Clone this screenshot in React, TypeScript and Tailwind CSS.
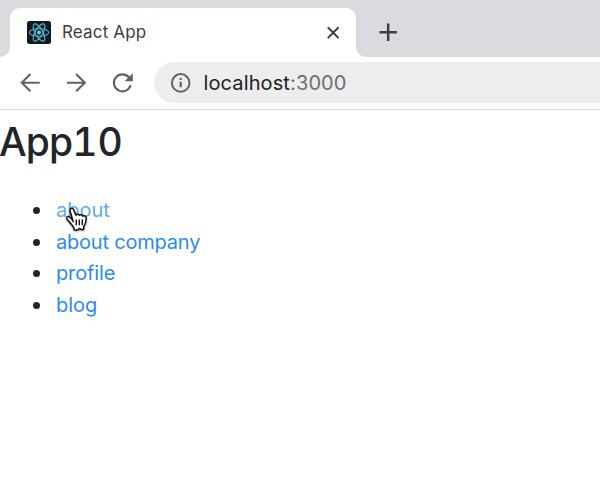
const links = [
  { label: 'about', style: 'text-[#62abf2] tracking-[0px]' },
  { label: 'about company', style: 'text-[#2d8bee] tracking-[-0.2px]' },
  { label: 'profile', style: 'text-[#2d8bee] tracking-[-0.15px]' },
  { label: 'blog', style: 'text-[#2d8bee] tracking-[0px]' },
];

function ReactLogo() {
  return (
    <svg width="24" height="24" viewBox="0 0 24 24" className="shrink-0">
      <rect width="24" height="23" rx="2.5" fill="#171a1c" />
      <g fill="none" stroke="#50b9d8" strokeWidth="1.1">
        <ellipse cx="12" cy="11.5" rx="9.7" ry="3.8" />
        <ellipse cx="12" cy="11.5" rx="9.7" ry="3.8" transform="rotate(60 12 11.5)" />
        <ellipse cx="12" cy="11.5" rx="9.7" ry="3.8" transform="rotate(120 12 11.5)" />
      </g>
      <circle cx="12" cy="11.5" r="2" fill="#61cdec" />
    </svg>
  );
}

function TabStrip() {
  return (
    <div className="flex h-[57px] items-end bg-[#dadbde]">
      <svg width="10" height="10" viewBox="0 0 10 10" className="shrink-0">
        <path d="M10 0A10 10 0 0 1 0 10H10Z" fill="#fff" />
      </svg>
      <div className="flex h-[49px] w-[346px] shrink-0 items-center rounded-t-[10px] bg-white pl-[17px] pr-4">
        <ReactLogo />
        <span className="ml-[11px] flex-1 pb-px text-[17px] leading-6 tracking-[0.15px] text-[#3c4043]">React App</span>
        <svg width="14" height="14" viewBox="0 0 14 14" stroke="#3c4043" strokeWidth="2">
          <path d="M1.8 1.3L12.6 12.1M12.6 1.3L1.8 12.1" />
        </svg>
      </div>
      <svg width="10" height="10" viewBox="0 0 10 10" className="shrink-0">
        <path d="M0 0A10 10 0 0 0 10 10H0Z" fill="#fff" />
      </svg>
      <svg width="20" height="20" viewBox="0 0 20 20" className="mb-[15px] ml-[12px]" stroke="#3c4043" strokeWidth="2.5">
        <path d="M10.2 1.6V19M1.5 10.3H18.9" />
      </svg>
    </div>
  );
}

function Toolbar() {
  return (
    <div className="flex h-[53px] items-center border-b border-[#d5d6d8] pb-px pl-[19px]">
      <svg width="22" height="22" viewBox="0 0 22 22" fill="none" stroke="#5f6368" strokeWidth="2.1">
        <path d="M20.7 10.7H3.2M11.4 2.1L2.8 10.7L11.4 19.3" />
      </svg>
      <svg width="22" height="22" viewBox="0 0 22 22" fill="none" stroke="#5f6368" strokeWidth="2.1" className="ml-6">
        <path d="M2 10.7H19.4M11.2 2.1L19.8 10.7L11.2 19.3" />
      </svg>
      <svg width="22" height="22" viewBox="0 0 22 22" fill="none" stroke="#5f6368" strokeWidth="2.1" className="ml-6">
        <path d="M19.6 13.2A8.5 8.5 0 1 1 17.8 5.2L19 6.6" />
        <path d="M21.8 1.2V9.2H13.5Z" fill="#5f6368" stroke="none" />
      </svg>
      <div className="ml-[21px] flex h-[41px] flex-1 items-center rounded-l-full bg-[#ededee] pl-4">
        <svg width="21" height="21" viewBox="0 0 21 21" fill="none" stroke="#5f6368" strokeWidth="2">
          <circle cx="10.7" cy="10.9" r="8.8" />
          <path d="M10.7 9.7V15.3M10.7 6V8.1" strokeWidth="2.2" />
        </svg>
        <span className="ml-[12.5px] pt-px text-[20px] leading-7 tracking-[0.12px] text-[#202124]">
          localhost<span className="text-[#6b6e72]">:3000</span>
        </span>
      </div>
    </div>
  );
}

function HandCursor() {
  return (
    <svg width="24" height="28" viewBox="0 0 24 28" className="absolute left-[9px] top-[11px] drop-shadow-[0_1px_1px_rgba(0,0,0,0.35)]">
      <path
        d="M8.4 16.2L5.1 5.2C4.3 2.4 7.3 1.1 8.6 3.7L11 9.1C12 7.7 13.8 8 14.3 9.2C15.5 8.2 17 8.7 17.5 10C19.5 9.2 21.3 10.3 21.2 12.5C21.2 16 20.2 18.5 18.7 20.8V23.6H16.3L14.5 22.4L12.8 24H9.4C9 21 7.2 19.2 5.4 17.2L2.2 13.2C0.7 11 3.1 9.6 4.8 11.2L7.8 14.2"
        fill="#fff"
        stroke="#111"
        strokeWidth="1.5"
        strokeLinejoin="round"
      />
      <path d="M11.3 13.5V19.3M14.3 13.5V19.3M17.3 13.5V19.3" stroke="#111" strokeWidth="1.4" />
    </svg>
  );
}

export default function App() {
  return (
    <div className="h-[478px] w-[600px] overflow-hidden bg-white font-['Inter','Liberation_Sans',sans-serif]">
      <TabStrip />
      <Toolbar />
      <main className="pt-[7px] text-[#212529]">
        <h1 className="-ml-px text-[39px] font-medium leading-[49px]">
          <span className="tracking-[-0.9px]">App</span>
          <span className="tabular-nums">10</span>
        </h1>
        <ul className="mt-[28px]">
          {links.map((link, index) => (
            <li key={link.label} className="flex h-[31.7px] items-center pl-[33px]">
              <span className="mr-4 mt-px size-[7px] shrink-0 rounded-full bg-[#212529]" />
              <span className="relative">
                <a className={`text-[20px] leading-[30px] ${link.style}`}>{link.label}</a>
                {index === 0 && <HandCursor />}
              </span>
            </li>
          ))}
        </ul>
      </main>
    </div>
  );
}
